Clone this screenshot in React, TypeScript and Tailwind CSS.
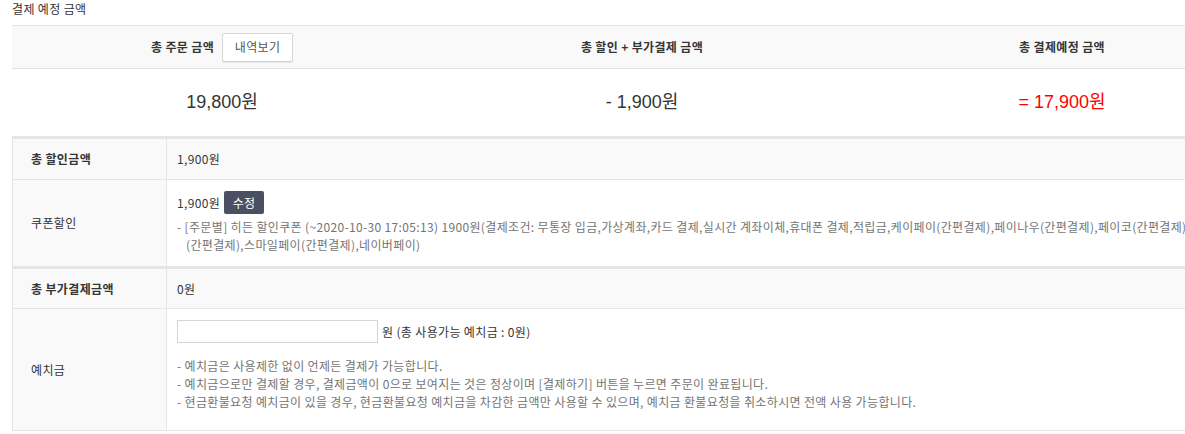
import React from "react";

const KR = { fontFamily: '"Noto Sans CJK KR", "Noto Sans", sans-serif' };

export default function App() {
  return (
    <div
      className="w-[1185px] h-[434px] overflow-hidden bg-white text-[12px] text-[#353535] tracking-[0.35px]"
      style={KR}
    >
      <div className="w-[1260px] ml-[12px]">
        {/* title */}
        <div className="h-[25px] leading-[18px] pt-0">결제 예정 금액</div>

        {/* summary */}
        <div className="border-t border-[#e3e3e3]">
          <div className="grid grid-cols-3 h-[43px] bg-[#f9f9f9] border-b border-[#e3e3e3]">
            <div className="flex items-center justify-center gap-[8px]">
              <span className="font-bold">총 주문 금액</span>
              <button className="h-[29px] w-[71px] bg-white border border-[#d7d7d7] rounded-[2px] text-[#555] text-[12px] shadow-[0_1px_0_#e5e5e5]">
                내역보기
              </button>
            </div>
            <div className="flex items-center justify-center font-bold">
              총 할인 + 부가결제 금액
            </div>
            <div className="flex items-center justify-center font-bold">
              총 결제예정 금액
            </div>
          </div>
          <div
            className="grid grid-cols-3 h-[67px] text-[18px] tracking-normal"
            style={{ fontFamily: '"Liberation Sans", "Noto Sans CJK KR", sans-serif' }}
          >
            <div className="flex items-center justify-center">19,800원</div>
            <div className="flex items-center justify-center">- 1,900원</div>
            <div className="flex items-center justify-center text-[#f00]">= 17,900원</div>
          </div>
        </div>

        {/* discount group */}
        <div className="border-t-[3px] border-[#e5e5e5] border-l">
          <div className="flex h-[41px] bg-[#f9f9f9] border-b border-[#e5e5e5]">
            <div className="w-[154px] shrink-0 border-r border-[#e5e5e5] pl-[18px] flex items-center font-bold">
              총 할인금액
            </div>
            <div className="flex-1 pl-[10px] flex items-center">1,900원</div>
          </div>
          <div className="flex h-[86px]">
            <div className="w-[154px] shrink-0 bg-[#f9f9f9] border-r border-[#e5e5e5] pl-[18px] flex items-center">
              쿠폰할인
            </div>
            <div className="flex-1 pl-[10px] pt-[11px]">
              <div className="flex items-center gap-[4px] h-[23px]">
                <span>1,900원</span>
                <button className="h-[23px] w-[40px] bg-[#4a5061] text-white text-[12px] rounded-[2px]">
                  수정
                </button>
              </div>
              <div className="mt-[4px] text-[#757575] leading-[18px]">
                <div className="whitespace-nowrap">
                  - [주문별] 히든 할인쿠폰 (~2020-10-30 17:05:13) 1900원(결제조건: 무통장 입금,가상계좌,카드 결제,실시간 계좌이체,휴대폰 결제,적립금,케이페이(간편결제),페이나우(간편결제),페이코(간편결제),카카오페이
                </div>
                <div className="whitespace-nowrap pl-[9px]">
                  (간편결제),스마일페이(간편결제),네이버페이)
                </div>
              </div>
            </div>
          </div>
        </div>

        {/* additional payment group */}
        <div className="border-t-[3px] border-[#e5e5e5] border-l border-b">
          <div className="flex h-[40px] bg-[#f9f9f9] border-b border-[#e5e5e5]">
            <div className="w-[154px] shrink-0 border-r border-[#e5e5e5] pl-[18px] flex items-center font-bold">
              총 부가결제금액
            </div>
            <div className="flex-1 pl-[10px] flex items-center">0원</div>
          </div>
          <div className="flex h-[121px]">
            <div className="w-[154px] shrink-0 bg-[#f9f9f9] border-r border-[#e5e5e5] pl-[18px] flex items-center">
              예치금
            </div>
            <div className="flex-1 pl-[10px] pt-[11px]">
              <div className="flex items-center gap-[4px] h-[23px]">
                <input
                  type="text"
                  className="w-[201px] h-[23px] border border-[#d5d5d5] bg-white outline-none"
                />
                <span>원 (총 사용가능 예치금 : 0원)</span>
              </div>
              <div className="mt-[14px] text-[#757575] leading-[18px]">
                <div className="whitespace-nowrap">- 예치금은 사용제한 없이 언제든 결제가 가능합니다.</div>
                <div className="whitespace-nowrap">
                  - 예치금으로만 결제할 경우, 결제금액이 0으로 보여지는 것은 정상이며 [결제하기] 버튼을 누르면 주문이 완료됩니다.
                </div>
                <div className="whitespace-nowrap">
                  - 현금환불요청 예치금이 있을 경우, 현금환불요청 예치금을 차감한 금액만 사용할 수 있으며, 예치금 환불요청을 취소하시면 전액 사용 가능합니다.
                </div>
              </div>
            </div>
          </div>
        </div>
      </div>
    </div>
  );
}
